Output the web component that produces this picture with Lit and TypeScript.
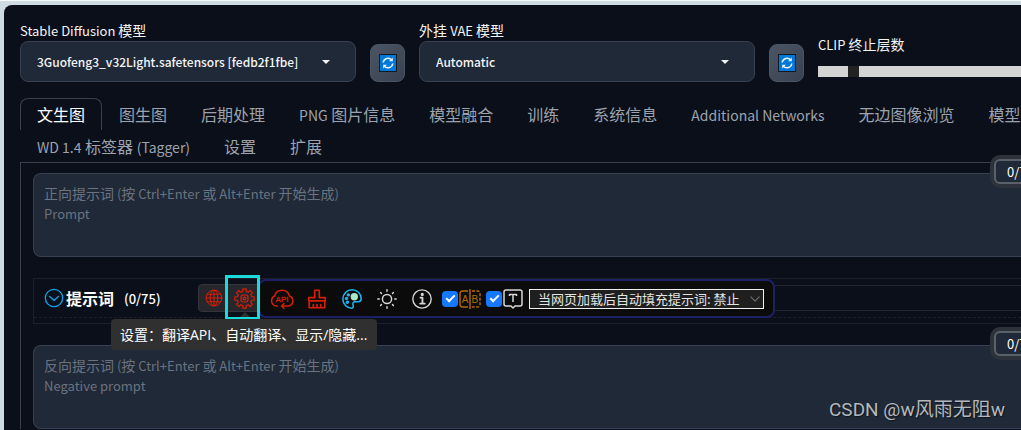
import { LitElement, html, css, svg } from "lit";
import { customElement, property } from "lit/decorators.js";

const line = (size: number, color: string, body: unknown, width = 1.5) => html`
  <svg width=${size} height=${size} viewBox="0 0 24 24" fill="none" stroke=${color}
    stroke-width=${width} stroke-linecap="round" stroke-linejoin="round" aria-hidden="true">${body}</svg>`;

const RED = "#d81e06";

const gearPath = (() => {
  const teeth = 8;
  const step = (Math.PI * 2) / teeth;
  const point = (r: number, a: number) =>
    `${(12 + r * Math.cos(a)).toFixed(2)} ${(12 + r * Math.sin(a)).toFixed(2)}`;
  const parts: string[] = [];
  for (let i = 0; i < teeth; i++) {
    const a = i * step;
    parts.push(point(8.4, a - 0.24), point(11.2, a - 0.17), point(11.2, a + 0.17), point(8.4, a + 0.24));
  }
  return `M${parts.join("L")}Z`;
})();

const icons = {
  chevron: () => line(20, "#12a0e8", svg`<circle cx="12" cy="12" r="10.4"/><path d="M6.5 10l5.5 5 5.5-5"/>`, 1.6),
  globe: () => line(18, RED, svg`<circle cx="12" cy="12" r="10.5"/><ellipse cx="12" cy="12" rx="5" ry="10.5"/>
    <path d="M12 1.5v21M1.5 12h21M3 7h18M3 17h18"/>`, 1.3),
  gear: () => line(21, RED, svg`<path d=${gearPath}/><rect x="8" y="8" width="8" height="8" rx="2.5"/><circle cx="12" cy="12" r="1.6"/>`, 1.4),
  cloud: () => html`<svg width="26" height="22" viewBox="0 0 26 22" fill="none" stroke=${RED} stroke-width="1.5"
    stroke-linecap="round" stroke-linejoin="round" aria-hidden="true">
    <path d="M8.500 18H7A5.300 5.300 0 0 1 5.600 8A7.600 7.600 0 0 1 20.400 8A5.200 5.200 0 0 1 19.500 18H12.500M15 15.500L12.500 18l2.500 2.500"/>
    <text x="13" y="14" text-anchor="middle" font-family="Liberation Sans, sans-serif" font-size="8" fill=${RED} stroke=${RED} stroke-width=".3">API</text></svg>`,
  brush: () => line(22, RED, svg`<path d="M9.500 10.500V2.500h5v8H21v3.500H3v-3.500zM3.500 14v7.500h17V14M8 21.500v-3.500M12 21.500v-3.500M16 21.500v-3.500"/>`, 1.8),
  palette: () => line(22, "#1ab4f0", svg`<path d="M12 2C6.500 2 2 6.500 2 12s4.500 10 9.500 10c2.500 0 2-2.500 1.500-4s.5-3 2.500-3H19c2 0 3-1.500 3-3.500C22 6 17.500 2 12 2z"/>
    <circle cx="6" cy="11.500" r="1" fill="#1ab4f0"/><circle cx="8" cy="7.500" r="1" fill="#1ab4f0"/><circle cx="7" cy="15.500" r="1" fill="#1ab4f0"/>
    <circle cx="14.500" cy="9.500" r="4" fill="#a8e8c8" stroke="none"/>`, 1.7),
  sun: () => line(22, "#d8d8d8", svg`<circle cx="12" cy="12" r="5"/>
    <path d="M12 2v1.500M12 20.500V22M2 12h1.500M20.500 12H22M5 5l1 1M18 18l1 1M5 19l1-1M18 6l1-1"/>`, 1.6),
  info: () => line(22, "#d8d8d8", svg`<circle cx="12" cy="12" r="10"/><path d="M10.300 10.500H12.500V17M10 17h5" stroke-width="2"/>
    <circle cx="12.300" cy="7" r="1" fill="#d8d8d8"/>`, 1.5),
  compare: () => html`<svg width="22" height="20" viewBox="0 0 22 20" fill="none" stroke="#b86a08" stroke-width="1.400" aria-hidden="true">
    <path d="M9 2H3.500A2.500 2.500 0 0 0 1 4.500v11A2.500 2.500 0 0 0 3.500 18H9M11 0v20"/>
    <path d="M13 2h5.500A2.500 2.500 0 0 1 21 4.500v11a2.500 2.500 0 0 1-2.500 2.500H13" stroke-dasharray="3 1.500"/>
    <text x="6.200" y="14" text-anchor="middle" font-family="Liberation Sans, sans-serif" font-size="10" fill="#b86a08" stroke="none">A</text>
    <text x="15.800" y="14" text-anchor="middle" font-family="Liberation Sans, sans-serif" font-size="10" fill="#b86a08" stroke="none">B</text></svg>`,
  text: () => html`<svg width="20" height="20" viewBox="0 0 20 20" fill="none" stroke="#d8d8d8" stroke-width="1.500" stroke-linejoin="round" aria-hidden="true">
    <path d="M3 1h14a2 2 0 0 1 2 2v12a2 2 0 0 1-2 2h-5L10 19 8 17H3a2 2 0 0 1-2-2V3a2 2 0 0 1 2-2z"/>
    <path d="M6.500 7V5.500h7V7M10 5.500V13"/></svg>`,
  refresh: () => html`<svg width="18" height="18" viewBox="0 0 18 18" fill="none" aria-hidden="true">
    <rect x=".5" y=".5" width="17" height="17" fill="#0078d7" stroke="#14191f"/>
    <path d="M4.200 8.500A4.900 4.900 0 0 1 12.800 6M13.800 9.500A4.900 4.900 0 0 1 5.200 12" stroke="#e8f4ff" stroke-width="1.500"/>
    <path d="M13.800 3.500v3.700h-3.700zM4.200 14.500v-3.700h3.700z" fill="#e8f4ff"/></svg>`,
};

const shared = css`
  *, *::before, *::after { box-sizing: border-box; }
  button, select, textarea, input { font: inherit; color: inherit; margin: 0; }
  svg { display: block; flex: none; }
`;

@customElement("prompt-field")
class PromptField extends LitElement {
  @property() lead = "";
  @property() name = "";

  static styles = [shared, css`
    :host { display: block; position: relative; }
    .area { display: block; width: 100%; height: 84px; resize: none; padding: 9px 10px; background: #1f2937;
      border: 1px solid #374151; border-radius: 8px 0 0 8px; border-right: 0; outline: none; font-size: 14px; }
    .hint { position: absolute; left: 11px; top: 10px; font-size: 14px; line-height: 20px; color: #6b7280; pointer-events: none; }
    .hint span { font-size: 13px; line-height: 1; }
    .count { position: absolute; top: -18px; right: -28px; padding: 4px; border-radius: 10px; background: #2d323b; }
    .value { display: block; width: 51px; padding: 0 11px; background: #1f2937; border: 2px solid #5b6169; border-radius: 6px;
      color: #fff; font-size: 13px; line-height: 21px; white-space: nowrap; }
  `];

  render() {
    return html`
      <textarea class="area" id="area"></textarea>
      <label class="hint" for="area">${this.lead}<span> (</span>按<span> Ctrl+Enter </span>或<span> Alt+Enter </span>开始生成<span>)</span><br><span>${this.name}</span></label>
      <div class="count"><span class="value">0/75</span></div>`;
  }
}

@customElement("prompt-toolbar")
class PromptToolbar extends LitElement {
  static styles = [shared, css`
    :host { display: block; position: relative; border: 1px solid #1b202b; border-right: 0; height: 46px; }
    .row { display: flex; align-items: center; height: 39px; padding-left: 10px; border-bottom: 1px dashed #1b202b; }
    button { display: flex; align-items: center; justify-content: center; padding: 0; border: 0; background: none; }
    .title { margin-left: 2px; font-size: 16px; font-weight: 700; color: #fff; }
    .tokens { margin-left: 10px; font-size: 13px; font-weight: 500; color: #fff; width: 74px; }
    .group { display: flex; width: 62px; height: 28px; background: #26272d; border: 1px solid #34353c; border-radius: 4px 0 0 4px; }
    .group button { width: 30px; }
    .line { flex: 1; height: 26px; border: solid #23262e; border-width: 1px 0; }
    .bar { position: absolute; left: 224px; top: 0; display: flex; align-items: center; height: 39px; padding: 0 9px 0 4px;
      background: #0b0b0b; border: 2px solid #1e2065; border-radius: 8px; white-space: nowrap; }
    .tools { display: flex; }
    .tools button { width: 35px; height: 26px; }
    .check { display: flex; align-items: center; gap: 1px; margin-left: 3px; }
    .check + .check { margin-left: 5px; }
    .check input { appearance: none; width: 16px; height: 16px; border-radius: 4px; display: grid; place-items: center; background: #1677ff; }
    .check input::after { content: ""; width: 5px; height: 9px; margin-top: -2px; border: solid #fff; border-width: 0 2px 2px 0; transform: rotate(45deg); }
    .fill { position: relative; margin-left: 6px; color: #e4e4e4; }
    .fill select { appearance: none; display: block; width: 235px; height: 20px; padding: 0 8px; font-size: 13px; line-height: 18px;
      background: #1f1f1f; border: 1px solid #f0f0f0; border-radius: 0; outline: none; }
    .fill svg { position: absolute; right: 4px; top: 5px; pointer-events: none; }
    .mark { position: absolute; left: 191px; top: -4px; width: 35px; height: 45px; border: 3px solid #1adada; pointer-events: none; }
    .arrow { position: absolute; left: 203px; top: 33px; border: 8px solid transparent; border-top: 0; border-bottom: 8px solid #303030; }
    .tip { position: absolute; left: 77px; top: 40px; z-index: 2; padding: 0 10px 0 9px; line-height: 30px; border-radius: 4px; background: #303030;
      color: #fff; font-size: 14px; white-space: nowrap; }
    .tip span { font-family: "Open Sans", sans-serif; }
  `];

  render() {
    return html`
      <div class="row">
        <button aria-label="收起">${icons.chevron()}</button>
        <span class="title">提示词</span>
        <span class="tokens">(0/75)</span>
        <div class="group">
          <button aria-label="语言">${icons.globe()}</button>
          <button aria-label="设置">${icons.gear()}</button>
        </div>
        <div class="line"></div>
      </div>
      <div class="bar">
        <div class="tools">
          <button aria-label="API">${icons.cloud()}</button>
          <button aria-label="清理">${icons.brush()}</button>
          <button aria-label="主题">${icons.palette()}</button>
          <button aria-label="亮度">${icons.sun()}</button>
          <button aria-label="关于">${icons.info()}</button>
        </div>
        <label class="check"><input type="checkbox" checked aria-label="对照">${icons.compare()}</label>
        <label class="check"><input type="checkbox" checked aria-label="文本提示">${icons.text()}</label>
        <div class="fill">
          <select aria-label="自动填充提示词"><option>当网页加载后自动填充提示词: 禁止</option></select>
          ${line(10, "#6a6a6a", svg`<path d="M2 7l10 10L22 7"/>`, 3)}
        </div>
      </div>
      <div class="arrow"></div>
      <div class="mark"></div>
      <div class="tip" role="tooltip">设置：翻译<span>API</span>、自动翻译、显示<span>/</span>隐藏<span>...</span></div>`;
  }
}

@customElement("app-root")
class AppRoot extends LitElement {
  static styles = [shared, css`
    :host { display: block; min-height: 100vh; padding: 4px 0 0 4px; border-top: 1px solid #f6fafb; background: #cfdbe3; overflow: hidden;
      font-family: "Noto Sans CJK SC", "Noto Sans CJK TC", sans-serif; color: #f3f4f6; position: relative; box-sizing: border-box; }
    .page { min-height: calc(100vh - 5px); padding: 15px 0 0 16px; background: #0b0f19; border-top-left-radius: 8px; overflow: hidden; }
    .settings { display: grid; grid-template-columns: 336fr 35px 336fr 35px 203fr; column-gap: 14px; align-items: end; }
    .field { position: relative; min-width: 0; }
    .field label, .clip label { display: block; font-size: 14px; line-height: 20px; white-space: nowrap; }
    .field label { margin-bottom: 1px; }
    label span { font-size: 13px; line-height: 1; }
    .field select { appearance: none; display: block; width: 100%; height: 41px; padding: 0 16px; font-size: 12px; font-weight: 500;
      background: #1f2937; border: 1px solid #374151; border-radius: 8px; outline: none; }
    .caret { position: absolute; right: 26px; bottom: 18px; border: 4px solid transparent; border-top-color: #f3f4f6; border-bottom: 0; pointer-events: none; }
    .refresh { display: grid; place-items: center; height: 38px; padding: 0; border: 1px solid #4b5563; border-radius: 8px;
      background: linear-gradient(to bottom right, #4b5563, #374151); }
    .clip { align-self: end; padding-bottom: 5px; }
    .clip label { margin-bottom: 12px; }
    .clip input { appearance: none; display: block; width: 100%; height: 11px; background: #d4d4d4; outline: none; }
    .clip input::-webkit-slider-thumb { appearance: none; width: 11px; height: 11px; background: #222; }
    .tabs { margin-top: 16px; }
    .tabrow { display: flex; }
    .tab { flex: none; height: 32px; padding: 0 16px; border: 1px solid transparent; border-bottom: 0; background: none;
      font-size: 16px; line-height: 31px; color: #9ca3af; white-space: nowrap; }
    .tab span { font-size: 14px; }
    .active { color: #fff; border-color: #374151; border-radius: 8px 8px 0 0; }
    .panel { display: flex; flex-direction: column; padding: 10px 0 0 12px; border: solid #374151; border-width: 1px 0 0 1px; }
    prompt-toolbar { margin: 21px 0; }
    .water { position: absolute; right: 16px; bottom: 5px; font-family: Roboto, "Noto Sans CJK SC", sans-serif; font-size: 19px;
      line-height: 30px; color: #b4b8bd; text-shadow: 1px 1px 1px #10151d; pointer-events: none; }
  `];

  render() {
    return html`
      <main class="page">
        <div class="settings">
          <div class="field">
            <label for="model"><span>Stable Diffusion </span>模型</label>
            <select id="model"><option>3Guofeng3_v32Light.safetensors [fedb2f1fbe]</option></select>
            <i class="caret"></i>
          </div>
          <button class="refresh" aria-label="刷新模型">${icons.refresh()}</button>
          <div class="field">
            <label for="vae">外挂 <span>VAE</span> 模型</label>
            <select id="vae"><option>Automatic</option></select>
            <i class="caret"></i>
          </div>
          <button class="refresh" aria-label="刷新 VAE">${icons.refresh()}</button>
          <div class="clip">
            <label for="clip"><span>CLIP</span> 终止层数</label>
            <input id="clip" type="range" min="0" max="32" .value=${"5"}>
          </div>
        </div>
        <nav class="tabs">
          <div class="tabrow">
            <button class="tab active">文生图</button>
            <button class="tab">图生图</button>
            <button class="tab">后期处理</button>
            <button class="tab"><span>PNG</span> 图片信息</button>
            <button class="tab">模型融合</button>
            <button class="tab">训练</button>
            <button class="tab">系统信息</button>
            <button class="tab"><span>Additional Networks</span></button>
            <button class="tab">无边图像浏览</button>
            <button class="tab">模型转换</button>
          </div>
          <div class="tabrow">
            <button class="tab"><span>WD 1.4</span> 标签器 <span>(Tagger)</span></button>
            <button class="tab">设置</button>
            <button class="tab">扩展</button>
          </div>
        </nav>
        <section class="panel">
          <prompt-field lead="正向提示词" name="Prompt"></prompt-field>
          <prompt-toolbar></prompt-toolbar>
          <prompt-field lead="反向提示词" name="Negative prompt"></prompt-field>
        </section>
      </main>
      <div class="water">CSDN @w风雨无阻w</div>`;
  }
}
